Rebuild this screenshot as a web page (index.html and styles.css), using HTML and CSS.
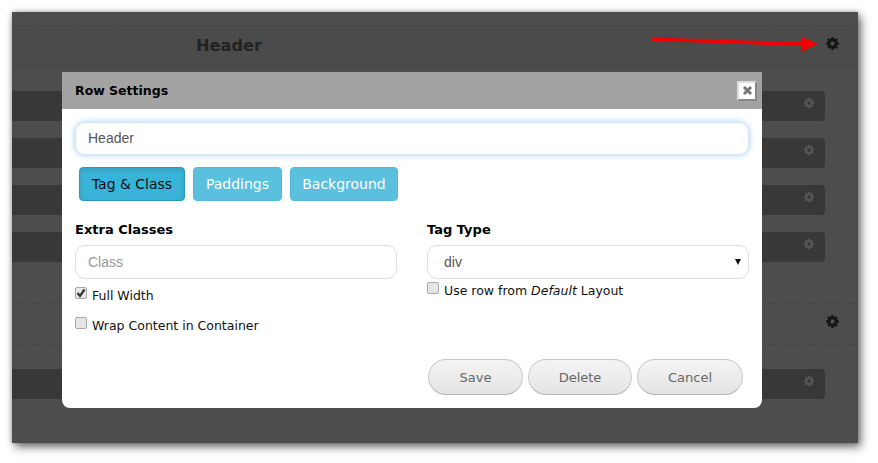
FILE: index.html
```html
<!DOCTYPE html>
<html lang="en">
<head>
<meta charset="utf-8">
<title>Row Settings</title>
<link rel="stylesheet" href="styles.css">
</head>
<body>
<svg class="defs" width="0" height="0"><defs><symbol id="cog" viewBox="0 0 1792 1792"><path fill-rule="evenodd" d="M1152 896q0-106-75-181t-181-75-181 75-75 181 75 181 181 75 181-75 75-181zm512-109v222q0 12-8 23t-20 13l-185 28q-19 54-39 91 35 50 107 138 10 12 10 25t-9 23q-27 37-99 108t-94 71q-12 0-26-9l-138-108q-44 23-91 38-16 136-29 186-7 28-36 28h-222q-14 0-24.500-8.500t-11.500-21.500l-28-184q-49-16-90-37l-141 107q-10 9-25 9-14 0-25-11-126-114-165-168-7-10-7-23 0-12 8-23 15-21 51-66.500t54-70.500q-27-50-41-99l-183-27q-13-2-21-12.500t-8-23.500v-222q0-12 8-23t19-13l186-28q14-46 39-92-40-57-107-138-10-12-10-24 0-10 9-23 26-36 98.500-107.500t94.500-71.500q13 0 26 10l138 107q44-23 91-38 16-136 29-186 7-28 36-28h222q14 0 24.500 8.500t11.500 21.500l28 184q49 16 90 37l142-107q9-9 24-9 13 0 25 10 129 119 165 170 7 8 7 22 0 12-8 23-15 21-51 66.500t-54 70.500q26 50 41 98l183 28q13 2 21 12.500t8 23.500z"/></symbol></defs></svg>
<div class="stage">
  <section class="band band-top">
    <h2 class="band-title">Header</h2>
    <svg class="cog cog-large"><use href="#cog"/></svg>
  </section>
  <div class="rows rows-top">
    <div class="row"><svg class="cog cog-small"><use href="#cog"/></svg></div>
    <div class="row"><svg class="cog cog-small"><use href="#cog"/></svg></div>
    <div class="row"><svg class="cog cog-small"><use href="#cog"/></svg></div>
    <div class="row"><svg class="cog cog-small"><use href="#cog"/></svg></div>
  </div>
  <section class="band band-second">
    <svg class="cog cog-large"><use href="#cog"/></svg>
  </section>
  <div class="rows rows-second">
    <div class="row"><svg class="cog cog-small"><use href="#cog"/></svg></div>
  </div>
</div>

<svg class="arrow" width="170" height="24" viewBox="0 0 170 24"><path d="M0 3.500 L150 8 L150 2.500 L167 10 L150 18 L150 12 L0 7Z" fill="#f00000"/></svg>

<div class="modal">
  <header class="modal-head">
    <h1 class="modal-title">Row Settings</h1>
    <button class="close" type="button" aria-label="Close"><svg width="11" height="11" viewBox="0 0 11 11"><path d="M2 2L9 9M9 2L2 9" stroke="#777" stroke-width="3" fill="none"/></svg></button>
  </header>
  <div class="modal-body">
    <div class="field name-field">Header</div>
    <div class="tabs">
      <button class="tab tab-active" type="button">Tag &amp; Class</button>
      <button class="tab" type="button">Paddings</button>
      <button class="tab" type="button">Background</button>
    </div>
    <div class="cols">
      <div class="col">
        <div class="label">Extra Classes</div>
        <div class="field placeholder">Class</div>
        <div class="check-row check-full"><span class="box"><svg width="12" height="12" viewBox="0 0 12 12"><path d="M2.500 6L5 9L9.500 2.500" stroke="#333" stroke-width="2.200" fill="none"/></svg></span><span>Full Width</span></div>
        <div class="check-row check-wrap"><span class="box"></span><span>Wrap Content in Container</span></div>
      </div>
      <div class="col">
        <div class="label">Tag Type</div>
        <div class="field select">div<span class="caret"></span></div>
        <div class="check-row check-use"><span class="box"></span><span>Use row from <em>Default</em> Layout</span></div>
      </div>
    </div>
    <div class="actions">
      <button class="btn btn-save" type="button">Save</button>
      <button class="btn btn-delete" type="button">Delete</button>
      <button class="btn btn-cancel" type="button">Cancel</button>
    </div>
  </div>
</div>
</body>
</html>
```
FILE: styles.css
```css
* { box-sizing: border-box; }
html, body { margin: 0; height: 100%; }
body {
  position: relative;
  width: 878px;
  height: 463px;
  overflow: hidden;
  background: #fff;
  padding: 12px 20px 20px 12px;
  font-family: "DejaVu Sans", Verdana, sans-serif;
}
.defs { position: absolute; }
.stage {
  width: 846px;
  height: 431px;
  background: #4d4d4d;
  padding: 13px 2px 0 0;
  box-shadow: 3px 4px 9px rgba(0,0,0,.55), 0 0 5px rgba(0,0,0,.25);
}
.band {
  display: flex;
  align-items: center;
  justify-content: center;
  position: relative;
  height: 42px;
  border-top: 1px dashed #444;
  border-bottom: 1px dashed #444;
}
.band-top { background: #4b4b4b; }
.band-title {
  margin: 0 410px 0 0;
  font-size: 16.200px;
  line-height: 40px;
  font-weight: 700;
  color: #222;
}
.band .cog-large { position: absolute; right: 16px; top: 10px; }
.cog { fill: currentColor; display: block; }
.cog-large { width: 15px; height: 15px; color: #151515; }
.cog-small { width: 12px; height: 12px; color: #555; margin-top: 6px; margin-left: auto; margin-right: 10px; }
.rows { display: flex; flex-direction: column; gap: 17px; width: 813px; }
.rows-top { margin-top: 24px; }
.rows-second { margin-top: 24px; }
.row {
  display: flex;
  height: 30px;
  background: #383838;
  border-radius: 0 4px 4px 0;
}
.band-second { margin-top: 41px; }
.arrow { position: absolute; left: 651px; top: 34px; }

.modal {
  position: absolute;
  left: 62px;
  top: 72px;
  width: 700px;
  height: 336px;
  background: #fff;
  border-radius: 0 0 8px 8px;
  overflow: hidden;
}
.modal-head {
  display: flex;
  align-items: center;
  height: 37px;
  background: #a3a3a3;
  padding: 0 5px 0 13px;
}
.modal-title {
  margin: 0;
  flex: 1;
  font-size: 12.500px;
  font-weight: 700;
  color: #000;
}
.close {
  display: flex;
  align-items: center;
  justify-content: center;
  width: 20px;
  height: 20px;
  padding: 0;
  background: #fff;
  border: 2px solid;
  border-color: #ddd #888 #888 #ddd;
}
.modal-body { padding: 13px 13px 0; }
.field {
  display: flex;
  align-items: center;
  height: 34px;
  padding: 0 12px;
  border: 1px solid #ddd;
  border-radius: 10px;
  background: #fff;
  font-family: "Liberation Sans", Arial, sans-serif;
  font-size: 14px;
  color: #555;
}
.name-field {
  height: 33px;
  padding-bottom: 2px;
  border-color: #d7e6f3;
  box-shadow: 0 0 6px rgba(102,175,233,.6);
}
.tabs { display: flex; gap: 8px; margin-top: 12px; padding-left: 4px; }
.tab {
  height: 34px;
  padding: 0;
  font-family: "DejaVu Sans", Verdana, sans-serif;
  font-size: 14px;
  color: #fff;
  background: #5bc0de;
  border: 1px solid #53b9d8;
  border-radius: 4px;
}
.tab:nth-child(1) { width: 106px; }
.tab:nth-child(2) { width: 89px; }
.tab:nth-child(3) { width: 108px; }
.tab-active {
  color: #111;
  background: #39b3d7;
  border-color: #269abc;
  box-shadow: inset 0 2px 4px rgba(0,0,0,.12);
}
.cols { display: flex; gap: 30px; margin-top: 21px; }
.col { width: 322px; }
.label { font-size: 13px; font-weight: 700; line-height: 16px; color: #000; margin-bottom: 7px; }
.placeholder { color: #999; }
.select { justify-content: space-between; padding: 0 7px 0 16px; }
.caret {
  width: 0;
  height: 0;
  border-left: 3px solid transparent;
  border-right: 3px solid transparent;
  border-top: 6px solid #111;
}
.check-row {
  display: flex;
  align-items: center;
  gap: 5px;
  font-size: 12.500px;
  line-height: 16px;
  color: #111;
}
.check-full { margin-top: 9px; }
.check-wrap { margin-top: 14px; }
.check-use { margin-top: 4px; }
.box {
  display: flex;
  flex: none;
  width: 12px;
  height: 12px;
  margin-top: -7px;
  background: #e6e6e6;
  border: 1px solid #a8a8a8;
  border-radius: 2px;
}
.box svg { margin: -1px; }
.actions { display: flex; justify-content: flex-end; gap: 5px; margin-top: 25px; padding-right: 6px; }
.btn {
  height: 36px;
  padding: 0;
  font-family: "DejaVu Sans", Verdana, sans-serif;
  font-size: 13px;
  color: #666;
  background: linear-gradient(#f4f4f4, #e4e4e4);
  border: 1px solid #c8c8c8;
  border-bottom-color: #b5b5b5;
  border-radius: 18px;
}
.btn-save { width: 95px; }
.btn-delete { width: 104px; }
.btn-cancel { width: 106px; }
```
